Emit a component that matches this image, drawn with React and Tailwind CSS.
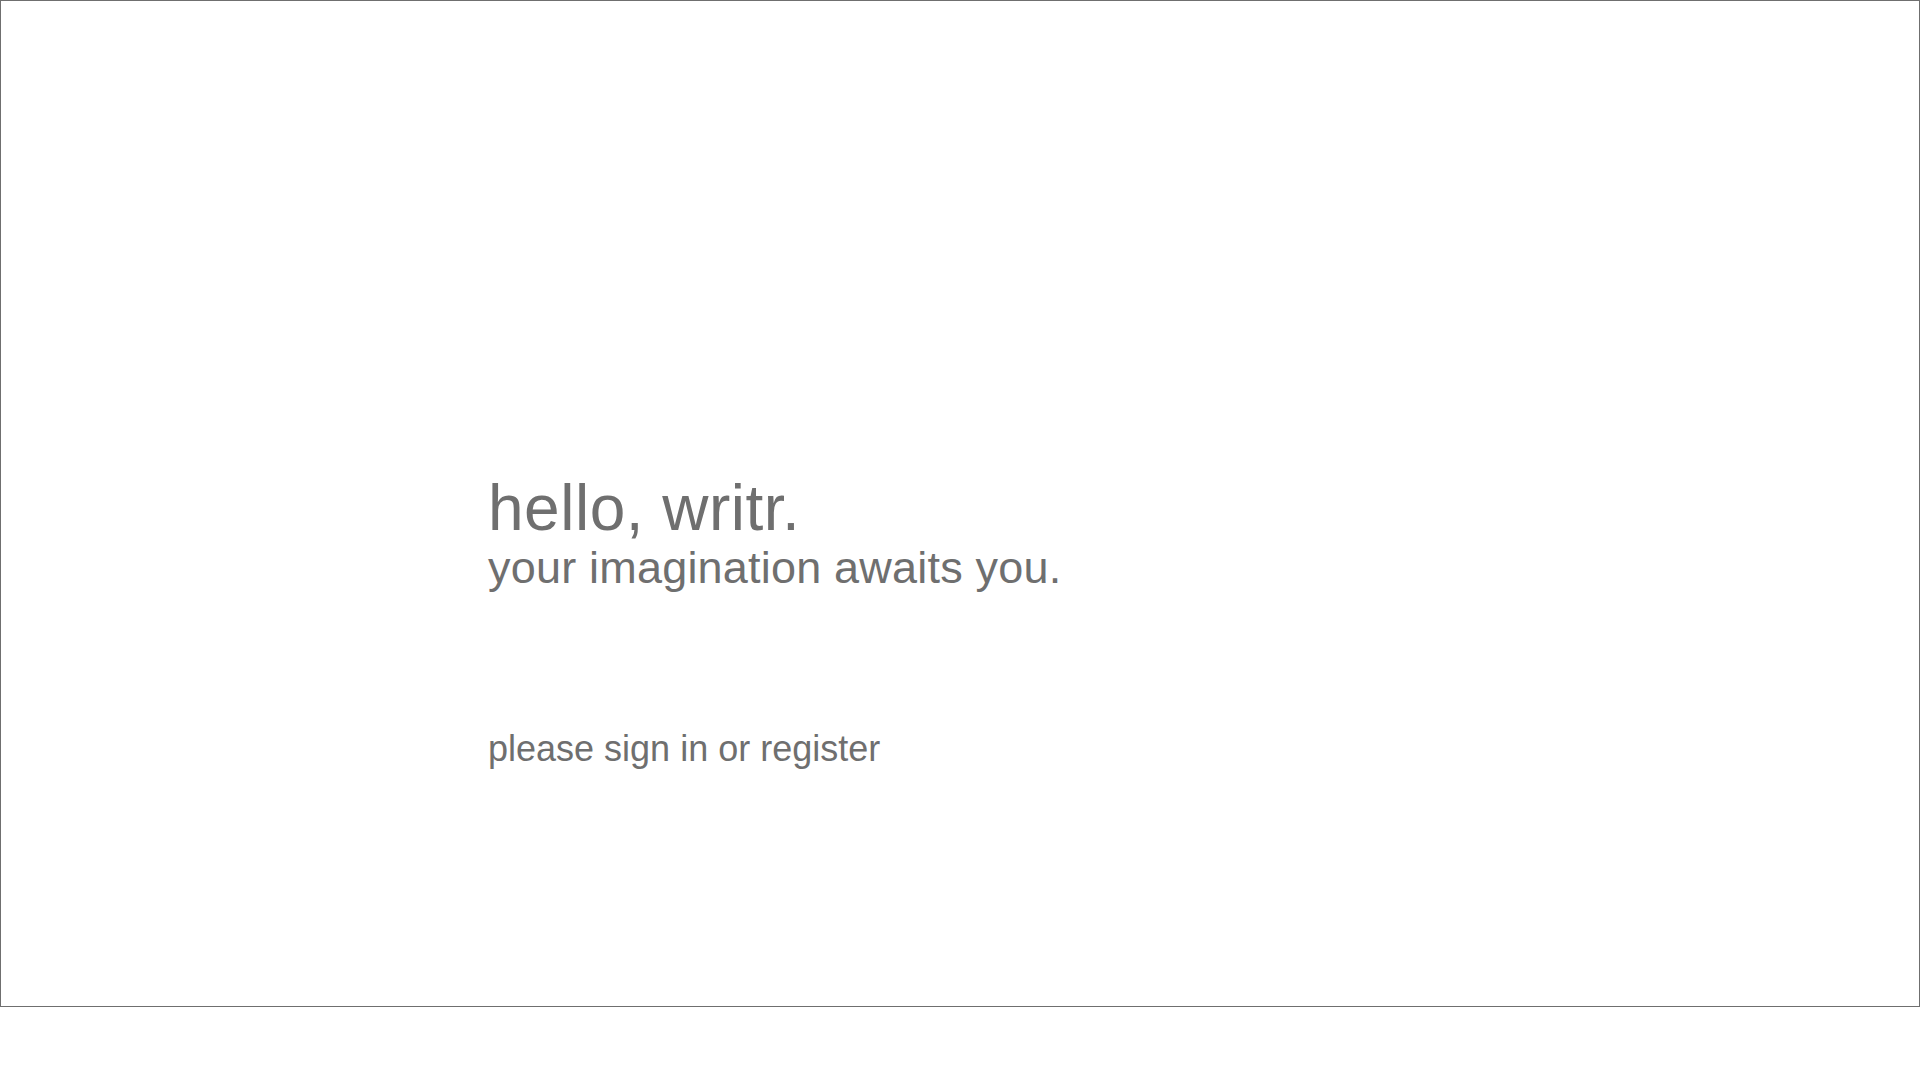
import React from "react";

// Écran d'accueil : salutation + invitation à se connecter
export default function App() {
    return (
        <div className="w-[1920px] h-[1080px] bg-white" style={{ fontFamily: '"Liberation Sans", Arial, sans-serif' }}>
            <div className="h-[1007px] border border-[#6f6f6f] pl-[487px] pt-[475px] text-[#6f6f6f]">
                <h1 className="text-[64px] leading-[64px] font-normal tracking-[0.5px]">hello, writr.</h1>
                <p className="mt-[2px] text-[45px] leading-[51px] tracking-[0.2px]">your imagination awaits you.</p>
                <p className="mt-[138px] text-[36px] leading-[36px]">please sign in or register</p>
            </div>
        </div>
    );
}
